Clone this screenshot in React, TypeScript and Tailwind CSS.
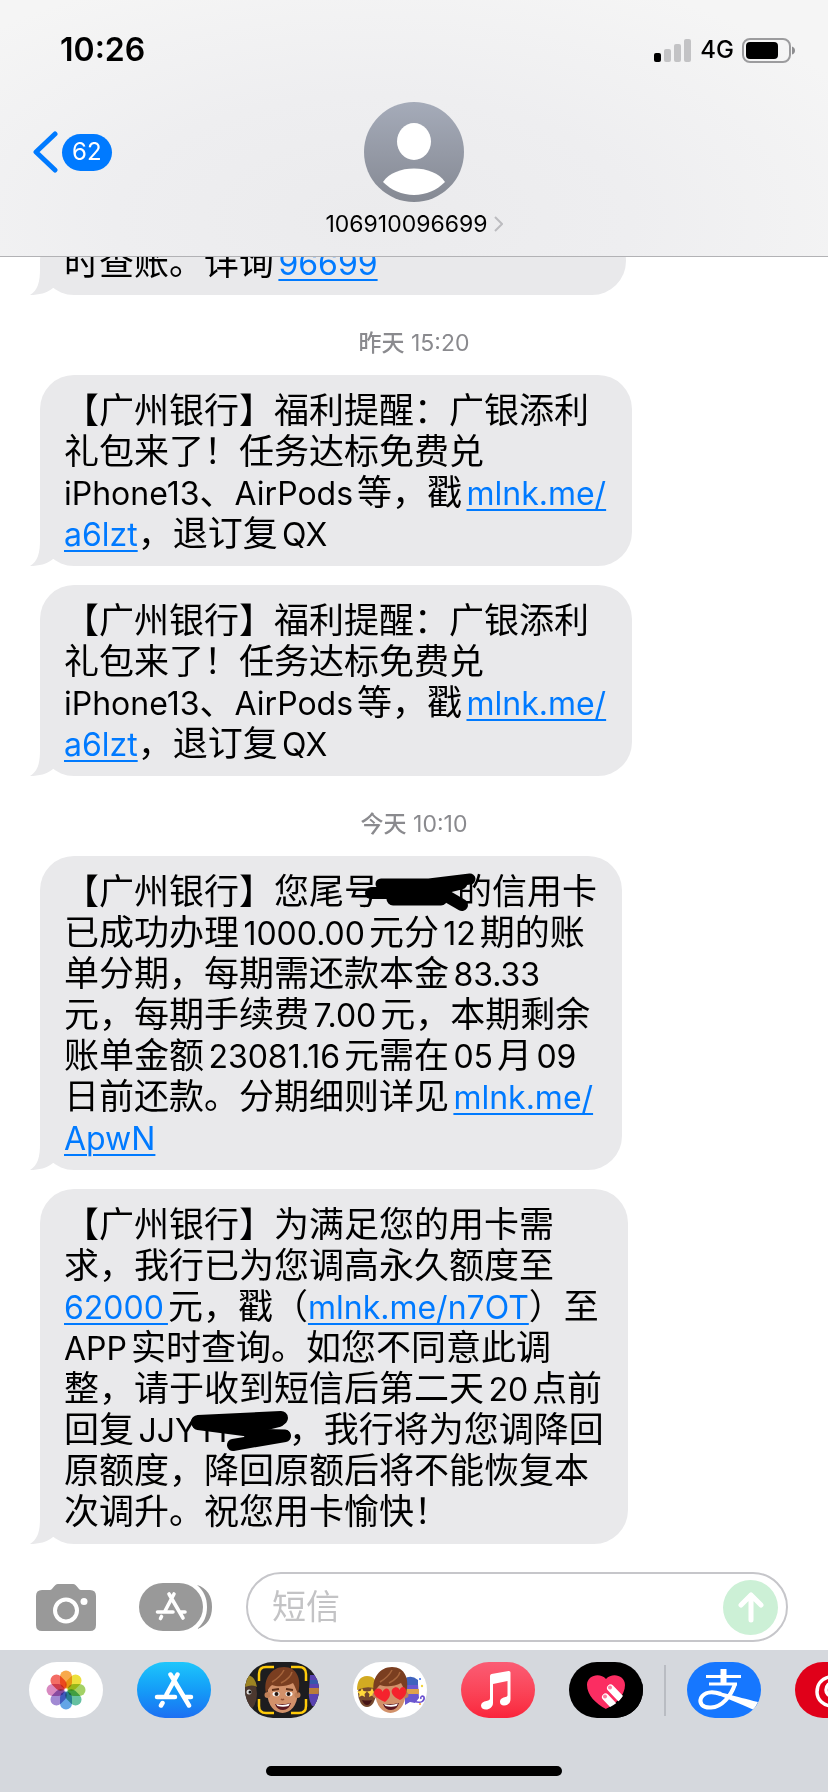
import React from "react";

type Part = string | { link: string; href: string } | { scribble: "card" | "code" };
type Message = { width: string; lines: Part[][] };

const promo: Message = {
  width: "max-w-[592px]",
  lines: [
    ["【广州银行】福利提醒：广银添利"],
    ["礼包来了！任务达标免费兑"],
    ["iPhone13、AirPods等，戳", { link: "mlnk.me/", href: "#a6lzt" }],
    [{ link: "a6lzt", href: "#a6lzt" }, "，退订复QX"],
  ],
};

const earlier: Message = {
  width: "max-w-[586px]",
  lines: [["时查账。详询", { link: "96699", href: "#96699" }]],
};

const instalment: Message = {
  width: "max-w-[582px]",
  lines: [
    ["【广州银行】您尾号", { scribble: "card" }, "的信用卡"],
    ["已成功办理1000.00元分12期的账"],
    ["单分期，每期需还款本金83.33"],
    ["元，每期手续费7.00元，本期剩余"],
    ["账单金额23081.16元需在05月09"],
    ["日前还款。分期细则详见", { link: "mlnk.me/", href: "#ApwN" }],
    [{ link: "ApwN", href: "#ApwN" }],
  ],
};

const limit: Message = {
  width: "max-w-[588px]",
  lines: [
    ["【广州银行】为满足您的用卡需"],
    ["求，我行已为您调高永久额度至"],
    [{ link: "62000", href: "#62000" }, "元，戳（", { link: "mlnk.me/n7OT", href: "#n7OT" }, "）至"],
    ["APP实时查询。如您不同意此调"],
    ["整，请于收到短信后第二天20点前"],
    ["回复JJY", { scribble: "code" }, "，我行将为您调降回"],
    ["原额度，降回原额后将不能恢复本"],
    ["次调升。祝您用卡愉快！"],
  ],
};

function Scribble({ kind }: { kind: "card" | "code" }) {
  if (kind === "card") {
    return (
      <span className="relative inline-block h-6 w-[78px]">
        <svg className="absolute -left-4 -top-2 h-[44px] w-[120px]" viewBox="0 0 120 44" fill="none" stroke="#000" strokeLinecap="round" strokeLinejoin="round" aria-hidden="true">
          <path d="M8 21H36" strokeWidth="12" />
          <path d="M18 12H66L107 7" strokeWidth="11" />
          <path d="M28 17H80M30 27H78M70 18L98 11" strokeWidth="13" />
          <path d="M80 22L99 33" strokeWidth="12" />
        </svg>
      </span>
    );
  }
  return (
    <span className="relative inline-block h-6 w-[92px]">
      <svg className="absolute -left-2 -top-2 h-[44px] w-[106px]" viewBox="0 0 106 44" fill="none" stroke="#000" strokeLinecap="round" strokeLinejoin="round" aria-hidden="true">
        <path d="M18 18V32M34 18V32" strokeWidth="3" strokeLinecap="butt" />
        <path d="M9 12L92 8" strokeWidth="14" />
        <path d="M9 14L55 20L90 11" strokeWidth="12" />
        <path d="M60 24L96 25" strokeWidth="11" />
        <path d="M44 35L96 26" strokeWidth="12" />
      </svg>
    </span>
  );
}

function Mixed({ text }: { text: string }) {
  return (
    <>
      {text.split(/([A-Za-z0-9./]+)/).map((run, i) =>
        i % 2 === 1 ? (
          <span key={i} className="text-[32px]">{run}</span>
        ) : (
          <React.Fragment key={i}>{run}</React.Fragment>
        ),
      )}
    </>
  );
}

function Bubble({ message }: { message: Message }) {
  return (
    <div className={`relative w-full rounded-[34px] bg-[#e9e9eb] px-6 pb-3 pt-[15px] ${message.width}`}>
      <svg className="absolute -left-[10px] bottom-0 h-[34px] w-[40px]" viewBox="0 0 40 34" fill="#e9e9eb" aria-hidden="true">
        <path d="M10 0V8C10 21 8 29 0 34C9 34 17 32 23 27L34 20V0Z" />
      </svg>
      <p className="relative text-[35px] leading-[41px] text-black [text-autospace:normal]">
        {message.lines.map((line, i) => (
          <span key={i} className="block h-[41px] whitespace-nowrap">
            {line.map((part, j) => {
              if (typeof part === "string") return <Mixed key={j} text={part} />;
              if ("link" in part)
                return (
                  <a key={j} href={part.href} className="text-[32px] text-[#007aff] underline decoration-2 underline-offset-4">
                    {part.link}
                  </a>
                );
              return <Scribble key={j} kind={part.scribble} />;
            })}
          </span>
        ))}
      </p>
    </div>
  );
}

function Stamp({ day, time }: { day: string; time: string }) {
  return (
    <p className="pb-5 pt-9 text-center text-[23px] leading-6 text-[#8a8a8e]">
      <span className="font-medium">{day}</span> {time}
    </p>
  );
}

function StoreGlyph({ className }: { className: string }) {
  return (
    <svg className={className} viewBox="0 0 40 36" fill="none" stroke="#fff" strokeWidth="4.500" strokeLinecap="round" aria-hidden="true">
      <path d="M23.500 2.500L12.500 22.500M16.500 2.500L35 33.500M3 25H21M30 25H37M8.500 31L7 33.500" />
    </svg>
  );
}

function Photos() {
  const petals = ["#f7941d", "#e8d80c", "#8cc63f", "#3fb28a", "#3b8fe0", "#8a6cc8", "#cf6bb0", "#f0483e"];
  return (
    <svg className="size-10" viewBox="0 0 40 40" aria-hidden="true">
      {petals.map((c, i) => (
        <rect key={c} x="14" y="0.500" width="12" height="18" rx="6" fill={c} opacity="0.800" transform={`rotate(${i * 45} 20 20)`} style={{ mixBlendMode: "multiply" }} />
      ))}
    </svg>
  );
}

function Boy({ hearts }: { hearts?: boolean }) {
  return (
    <g>
      <ellipse cx="37.500" cy="32" rx="15" ry="19" fill="#d2916a" />
      <circle cx="22.500" cy="33" r="3" fill="#c08058" />
      <circle cx="52.500" cy="33" r="3" fill="#c08058" />
      <path d="M21 31C18 16 27 5 39 5C52 5 57 17 53 32C51 28 50 24 48 21C41 25 32 25 27 23C24 25 23 28 21 31Z" fill="#7a3e20" />
      <path d="M27 20C32 17 37 12 39 8M36 21C42 18 46 14 47 10" stroke="#a7653c" strokeWidth="1.500" fill="none" />
      {hearts ? (
        <g fill="#f5222d">
          <path d="M32 40C23 36 19 32 22 28C25 25 29 27 29.500 30C31 26 35 25 36.500 29C38 33 36 37 32 40Z" />
          <path d="M47 38C40 35 37 30 39.500 27C42 24 46 25 46.500 28C48 24 52 24 53 28C54 32 51 36 47 38Z" />
        </g>
      ) : (
        <g>
          <path d="M27 28L34 27M41 27L48 28" stroke="#5f2f18" strokeWidth="1.800" />
          <ellipse cx="31" cy="32" rx="3.500" ry="2.300" fill="#fff" />
          <ellipse cx="44" cy="32" rx="3.500" ry="2.300" fill="#fff" />
          <circle cx="31.500" cy="32" r="2" fill="#24140d" />
          <circle cx="43.500" cy="32" r="2" fill="#24140d" />
          <path d="M36 37Q37.500 38.500 39 37" stroke="#925034" strokeWidth="1.500" fill="none" />
        </g>
      )}
      <path d="M30 42Q38 43 46 41Q44 48 38 48Q32 48 30 42Z" fill="#5b1820" />
      <path d="M31 42Q38 44 45 41.500L43.500 44Q38 45.500 32.500 44Z" fill="#fff" />
    </g>
  );
}

function Memoji({ stickers }: { stickers?: boolean }) {
  return (
    <svg className="h-14 w-[74px]" viewBox="0 0 74 56" aria-hidden="true">
      <rect width="74" height="56" fill={stickers ? "#fff" : "#1d1d1f"} />
      {stickers ? (
        <g>
          <ellipse cx="14" cy="31" rx="9" ry="14" fill="#75482e" />
          <path d="M4 28Q4 14 14 14Q24 14 24 27Q14 23 4 28Z" fill="#d2aa22" />
          <path d="M9 26L10.500 29L14 29.500L11.500 32L12 35L9 33.500L6 35L6.500 32L4 29.500L7.500 29ZM19 26L20.500 29L24 29.500L21.500 32L22 35L19 33.500L16 35L16.500 32L14 29.500L17.500 29Z" fill="#ffd83b" />
          <path d="M9 38Q14 39 19 38Q17 43 14 43Q11 43 9 38Z" fill="#461416" />
          <path d="M52 22H65L66 36L62 41L57 40L52 43Z" fill="#6a58cf" />
          <path d="M51 17Q58 12 65 18V23H51Z" fill="#3f63bd" />
          <path d="M52 27H66V32H52Z" fill="#dfa34b" />
          <path d="M61 39C68 42 72 39 71 35C69 33 67 35 68 37" stroke="#6a4fd0" strokeWidth="1.600" fill="none" />
          <circle cx="67" cy="17" r="1" fill="#3b6ee8" />
          <circle cx="69" cy="24" r="1.200" fill="#f2d43c" />
          <circle cx="67" cy="42" r="1" fill="#ef9a38" />
        </g>
      ) : (
        <g>
          <ellipse cx="3" cy="32" rx="9" ry="16" fill="#4c382f" />
          <path d="M0 13Q10 12 12 25Q7 22 0 25Z" fill="#9c8322" />
          <circle cx="4" cy="30" r="2.500" fill="#ddd" />
          <circle cx="5" cy="30" r="1.500" fill="#111" />
          <path d="M65 13H74V44H67Q63 37 64 29Z" fill="#5942b0" />
          <path d="M65 18H74V22H65Z" fill="#3558aa" />
          <path d="M64 26H74V32H64Z" fill="#b97d38" />
        </g>
      )}
      <Boy hearts={stickers} />
      {!stickers && (
        <path d="M14 19V12Q14 5 21 5H29M46 5H54Q61 5 61 12V19M61 37V44Q61 51 54 51H46M29 51H21Q14 51 14 44V37" fill="none" stroke="#ffcb0a" strokeWidth="2.500" />
      )}
    </svg>
  );
}

function Music() {
  return (
    <svg className="h-14 w-[74px]" viewBox="0 0 74 56" aria-hidden="true">
      <path d="M29 14Q29 12.500 30.500 12L47.500 9Q49.500 8.800 49.500 10.500V37C49.500 41 47 43.500 43 43.500C40.500 43.500 39 42 39 40C39 36.500 42 35.500 44.500 35C46 34.700 46.500 34 46.500 33V19L32 22V41C32 45 28.500 47.500 25 47.500C22 47.500 20 46 20 43.500C20 41 22.500 39.500 25.500 39C28 38.500 29 38 29 36Z" fill="#fff" />
    </svg>
  );
}

function HeartTouch() {
  return (
    <svg className="h-14 w-[74px]" viewBox="0 0 74 56" aria-hidden="true">
      <path d="M37 47C27 42 18 33 18 23C18 13 31 10 37 17C43 10 56 13 56 23C56 33 47 42 37 47Z" fill="#fb2d62" />
      <g stroke="#fff" strokeWidth="7" strokeLinecap="round">
        <path d="M41.500 26L52 37M36.500 35L45 44" />
      </g>
      <path d="M57 26C56 35 47 43 37 47V56H74V20Z" fill="#000" />
      <circle cx="41" cy="25.500" r="2" fill="#fb7fa0" />
      <circle cx="36" cy="34.500" r="2" fill="#fb7fa0" />
    </svg>
  );
}

function Alipay() {
  return (
    <svg className="h-14 w-[74px]" viewBox="0 0 74 56" fill="none" stroke="#fff" aria-hidden="true">
      <path d="M19 14.500H54M22 22H50" strokeWidth="2.800" />
      <path d="M36.500 7V22" strokeWidth="6" />
      <path d="M48 22C44 34 35 45 24 45.500C15 46 12 41 14 36C17 30 25 29 34 32" strokeWidth="4" />
      <path d="M27 29.500C36 30 46 34 71 40L67 48C56 43 44 38 31 33Z" fill="#fff" stroke="none" />
    </svg>
  );
}

function Dock() {
  const pill = "flex h-14 w-[74px] shrink-0 items-center justify-center overflow-hidden rounded-[28px]";
  return (
    <nav aria-label="iMessage 应用" className="flex items-center gap-[34px] overflow-hidden pl-[29px]">
      <button aria-label="照片" className={`${pill} bg-white`}><Photos /></button>
      <button aria-label="商店" className={`${pill} bg-linear-to-b from-[#1fc6fb] to-[#1d6ff2]`}><StoreGlyph className="h-9 w-10" /></button>
      <button aria-label="拟我表情" className={pill}><Memoji /></button>
      <button aria-label="贴纸" className={pill}><Memoji stickers /></button>
      <button aria-label="音乐" className={`${pill} bg-linear-to-b from-[#fb5c74] to-[#fa233b]`}><Music /></button>
      <div className="flex shrink-0 items-center gap-[21px]">
        <button aria-label="Digital Touch" className={`${pill} bg-black`}><HeartTouch /></button>
        <span className="h-[51px] w-[2px] bg-[#b9bcc2]" />
        <button aria-label="支付宝" className={`${pill} bg-[#1677ff]`}><Alipay /></button>
      </div>
      <button aria-label="网易云音乐" className={`${pill} bg-[#e00019]`}>
        <svg className="h-14 w-[74px]" viewBox="0 0 74 56" fill="none" stroke="#fff" strokeWidth="3.500" strokeLinecap="round" aria-hidden="true">
          <path d="M34 15C26 17 22 23 22 30C22 38 29 44 37 44C46 44 52 38 52 31C52 24 46 20 40 20C34 20 31 24 31 28C31 32 34 34 37 34C41 34 43 31 42 27L39 16C39 12 43 10 47 13" />
        </svg>
      </button>
    </nav>
  );
}

export default function App() {
  return (
    <div className="flex h-screen min-h-[900px] flex-col overflow-hidden bg-white font-['Inter','Noto_Sans_CJK_SC',sans-serif]" lang="zh-CN">
      <header className="relative shrink-0 border-b border-[#b2b2b5] bg-[radial-gradient(ellipse_at_45%_85%,#ebebed_0%,#eeeeF0_40%,#f5f5f5_85%)] pb-[19px]">
        <div className="flex items-center justify-between pl-[60px] pr-8 pt-[30px]">
          <time className="text-[32px] font-semibold leading-10 text-black">10:26</time>
          <div className="flex items-center gap-2">
            <svg className="h-6 w-[38px]" viewBox="0 0 38 24" aria-hidden="true">
              <rect x="0" y="15" width="7" height="9" rx="2" fill="#000" />
              <rect x="10" y="11" width="7" height="13" rx="2" fill="#c3c3c5" />
              <rect x="20" y="6" width="7" height="18" rx="2" fill="#c3c3c5" />
              <rect x="30" y="1" width="7" height="23" rx="2" fill="#c3c3c5" />
            </svg>
            <span className="text-[24px] font-medium leading-8 text-black">4G</span>
            <svg className="h-[25px] w-[54px]" viewBox="0 0 54 25" aria-hidden="true">
              <rect x="1" y="1" width="47" height="23" rx="7" fill="none" stroke="#9c9c9e" strokeWidth="2" />
              <rect x="4" y="4" width="32" height="17" rx="4" fill="#000" />
              <path d="M50 8.500Q53 9.500 53 12.500T50 16.500Z" fill="#8e8e90" />
            </svg>
          </div>
        </div>
        <div className="grid grid-cols-[1fr_auto_1fr] pt-8">
          <button aria-label="返回" className="flex h-[100px] items-center gap-1 pl-8">
            <svg className="h-11 w-[26px]" viewBox="0 0 26 44" fill="none" stroke="#007aff" strokeWidth="5" strokeLinecap="round" strokeLinejoin="round" aria-hidden="true">
              <path d="M23 4L4 22L23 40" />
            </svg>
            <span className="flex h-[37px] items-center rounded-full bg-[#007aff] px-[10px] text-[24px] text-white">62</span>
          </button>
          <button className="flex flex-col items-center">
            <svg className="size-[100px]" viewBox="0 0 100 100" aria-hidden="true">
              <defs>
                <linearGradient id="avatar" x1="0" y1="0" x2="0" y2="1">
                  <stop offset="0" stopColor="#a5abb9" />
                  <stop offset="1" stopColor="#858993" />
                </linearGradient>
              </defs>
              <circle cx="50" cy="50" r="50" fill="url(#avatar)" />
              <ellipse cx="50" cy="39.500" rx="17" ry="18.500" fill="#fff" />
              <path d="M19 80C25 71 37 66.500 50 66.500S75 71 81 80C73 88 62 93 50 93S27 88 19 80Z" fill="#fff" />
            </svg>
            <span className="flex items-center gap-[6px] pt-[9px] text-[23px] leading-[26px] text-black">
              106910096699
              <svg className="h-4 w-[9px]" viewBox="0 0 9 16" fill="none" stroke="#bcbcc0" strokeWidth="2" aria-hidden="true">
                <path d="M1 1L8 8L1 15" />
              </svg>
            </span>
          </button>
        </div>
      </header>

      <main className="flex min-h-0 flex-1 flex-col justify-end overflow-hidden bg-white">
        <div className="flex shrink-0 flex-col pb-7">
          <div className="px-10"><Bubble message={earlier} /></div>
          <Stamp day="昨天" time="15:20" />
          <div className="flex flex-col gap-[19px] px-10">
            <Bubble message={promo} />
            <Bubble message={promo} />
          </div>
          <Stamp day="今天" time="10:10" />
          <div className="flex flex-col gap-[19px] px-10">
            <Bubble message={instalment} />
            <Bubble message={limit} />
          </div>
        </div>
      </main>

      <form className="flex shrink-0 items-center bg-white pb-2 pl-9 pr-10" onSubmit={(e) => e.preventDefault()}>
        <button type="button" aria-label="相机" className="shrink-0">
          <svg className="h-[47px] w-[60px]" viewBox="0 0 60 47" aria-hidden="true">
            <path d="M6 6H14C17 6 18 0 22 0H37C41 0 42 6 45 6H54Q60 6 60 12V41Q60 47 54 47H6Q0 47 0 41V12Q0 6 6 6Z" fill="#999" />
            <circle cx="30" cy="26.500" r="11" fill="none" stroke="#fff" strokeWidth="4" />
            <circle cx="48" cy="17.500" r="3.500" fill="#fff" />
          </svg>
        </button>
        <button type="button" aria-label="应用" className="ml-[43px] shrink-0">
          <svg className="h-12 w-[73px]" viewBox="0 0 73 48" aria-hidden="true">
            <path d="M58 2C68 5 73 13 73 24S68 43 58 46C65 40 68 33 68 24S65 8 58 2Z" fill="#999" />
            <rect width="64" height="48" rx="24" fill="#999" />
            <g fill="none" stroke="#fff" strokeWidth="3.600" strokeLinecap="round">
              <path d="M35 11L26 28M30 11L44 35M18.500 29H34M41 29H46M22.500 33.500L21.500 35.500" />
            </g>
          </svg>
        </button>
        <div className="ml-[34px] flex h-[70px] min-w-0 flex-1 items-center rounded-full border-2 border-[#c6c6ca] pl-6 pr-2">
          <input aria-label="短信" placeholder="短信" className="min-w-0 flex-1 bg-transparent text-[34px] leading-10 text-black outline-none placeholder:text-[#c3c3c5]" />
          <button aria-label="发送" className="flex size-[55px] shrink-0 items-center justify-center rounded-full bg-[#ccf0d6]">
            <svg className="h-8 w-7" viewBox="0 0 28 32" fill="none" stroke="#fff" strokeWidth="5" strokeLinecap="round" strokeLinejoin="round" aria-hidden="true">
              <path d="M14 29V4M4 14L14 4L24 14" />
            </svg>
          </button>
        </div>
      </form>

      <footer className="flex shrink-0 flex-col bg-[#d5d8dd] pb-4 pt-3">
        <Dock />
        <span className="mx-auto mt-12 h-[10px] w-[296px] rounded-full bg-black" />
      </footer>
    </div>
  );
}
